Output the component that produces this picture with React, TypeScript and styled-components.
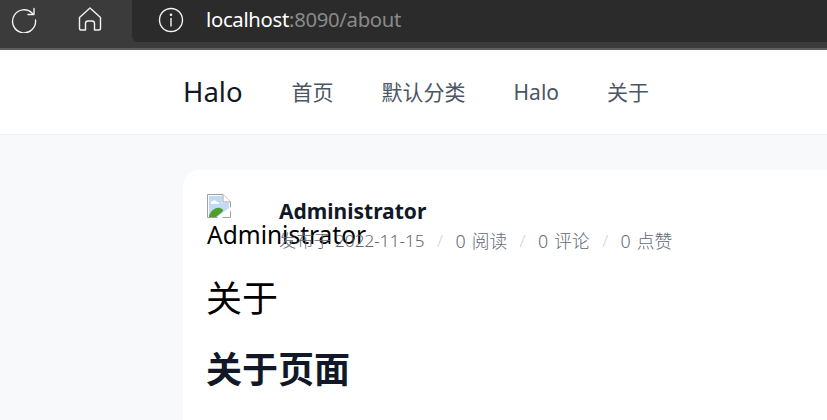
import styled, { createGlobalStyle } from "styled-components";

const FONT = `"Noto Sans", "Noto Sans CJK SC", sans-serif`;

const GlobalStyle = createGlobalStyle`
  html, body {
    margin: 0;
    padding: 0;
    height: 420px;
    overflow: hidden;
    background-color: #f8f9fb;
    font-family: ${FONT};
  }
`;

const BrowserBar = styled.div`
  display: flex;
  height: 48px;
  background-color: #3b3b3b;
  border-bottom: 2px solid #5f5f5f;
`;

const ToolButtons = styled.div`
  display: flex;
  align-items: flex-start;
  width: 132px;
  flex-shrink: 0;
  padding: 7px 0 0 11px;
  gap: 40px;
  box-sizing: border-box;
`;

const AddressBar = styled.div`
  flex: 1;
  box-sizing: border-box;
  height: 42px;
  display: flex;
  align-items: center;
  padding: 0 0 3px 26px;
  gap: 22px;
  background-color: #2b2b2b;
  border-bottom-left-radius: 6px;
`;

const Url = styled.span`
  font-size: 20.3px;
  letter-spacing: -0.3px;
  color: #ffffff;
  margin-top: -1px;
`;

const UrlRest = styled.span`
  color: #8a8a8a;
`;

const Header = styled.header`
  height: 84px;
  display: flex;
  align-items: center;
  padding-left: 183px;
  background-color: #ffffff;
  border-bottom: 1px solid #eef0f3;
`;

const Brand = styled.a`
  font-size: 27.5px;
  line-height: 84px;
  color: #111827;
  margin-right: 49px;
`;

const Nav = styled.nav`
  display: flex;
  align-items: baseline;
  gap: 48px;
`;

const NavLink = styled.a`
  font-size: 21px;
  line-height: 28px;
  color: #4b5563;
`;

const Main = styled.main`
  padding: 35px 0 0 183px;
`;

const Card = styled.article`
  box-sizing: border-box;
  background-color: #ffffff;
  border-radius: 16px 0 0 0;
  padding: 24px;
  height: 250px;
`;

const AuthorRow = styled.div`
  display: flex;
  gap: 24px;
`;

const Avatar = styled.div`
  width: 48px;
  height: 48px;
  flex-shrink: 0;
`;

const BrokenImage = styled.svg`
  display: block;
`;

const AvatarAlt = styled.div`
  font-size: 24.5px;
  line-height: 34px;
  color: #000000;
  white-space: nowrap;
`;

const AuthorInfo = styled.div`
  display: flex;
  flex-direction: column;
`;

const AuthorName = styled.div`
  font-size: 21px;
  line-height: 34px;
  font-weight: 700;
  color: #111827;
`;

const Meta = styled.div`
  display: flex;
  font-size: 17.2px;
  font-weight: 300;
  line-height: 26px;
  color: #616875;
`;

const Stat = styled.span`
  font-size: 17.8px;
  word-spacing: 1.5px;
`;

const Slash = styled.span`
  color: #d1d5db;
  margin: 0 12.4px;
`;

const PageTitle = styled.h1`
  margin: 20px 0 0 -1px;
  font-size: 36px;
  line-height: 50px;
  font-weight: 400;
  color: #000000;
`;

const Heading = styled.h2`
  margin: 21px 0 0 -1px;
  font-size: 36px;
  line-height: 50px;
  font-weight: 700;
  color: #111827;
`;

export default function App() {
  return (
    <>
      <GlobalStyle />
      <BrowserBar>
        <ToolButtons>
          <svg width="26" height="26" viewBox="0 0 26 26" fill="none" stroke="#f2f2f2" strokeWidth="1.4" strokeLinecap="round" strokeLinejoin="round">
            <path d="M21.5 6.5A11.5 11.5 0 1 0 24.5 13" />
            <path d="M23 1.5V7.5H17" />
          </svg>
          <svg width="26" height="26" viewBox="0 0 26 26" fill="none" stroke="#f2f2f2" strokeWidth="1.4" strokeLinecap="round" strokeLinejoin="round">
            <path d="M13 1L23.5 10.5V21.5A1.5 1.5 0 0 1 22 23H17.5V16.5A2.5 2.5 0 0 0 15 14H11A2.5 2.5 0 0 0 8.5 16.5V23H4A1.5 1.5 0 0 1 2.5 21.5V10.5Z" />
          </svg>
        </ToolButtons>
        <AddressBar>
          <svg width="26" height="26" viewBox="0 0 26 26" fill="none" stroke="#f2f2f2" strokeWidth="1.4" strokeLinecap="round">
            <circle cx="13" cy="13" r="11.5" />
            <path d="M13 11.5V19" />
            <circle cx="13" cy="7.8" r="0.6" fill="#f2f2f2" />
          </svg>
          <Url>
            localhost<UrlRest>:8090/about</UrlRest>
          </Url>
        </AddressBar>
      </BrowserBar>
      <Header>
        <Brand>Halo</Brand>
        <Nav>
          <NavLink>首页</NavLink>
          <NavLink>默认分类</NavLink>
          <NavLink>Halo</NavLink>
          <NavLink>关于</NavLink>
        </Nav>
      </Header>
      <Main>
        <Card>
          <AuthorRow>
            <Avatar>
              <BrokenImage width="24" height="24" viewBox="0 0 24 24">
                <path d="M0.5 0.5H16L23.5 8V23.5H0.5Z" fill="#ffffff" stroke="#a0a0a0" />
                <path d="M2 2H15V9H22V14L10 23H2Z" fill="#c3daf6" />
                <path d="M4 8C6 6 9 6 10 8C12 8 13 9 12 10H4Z" fill="#ffffff" />
                <path d="M2 22C4 16 9 13 13 14C16 15 17 16 15 18L9 23H2Z" fill="#4f9e2e" />
                <path d="M16 0.5V8H23.5" fill="#ffffff" stroke="#a0a0a0" />
                <path d="M10 24L24 13V17L15 24Z" fill="#ffffff" />
              </BrokenImage>
              <AvatarAlt>Administrator</AvatarAlt>
            </Avatar>
            <AuthorInfo>
              <AuthorName>Administrator</AuthorName>
              <Meta>
                <span>发布于 2022-11-15</span>
                <Slash>/</Slash>
                <Stat>0 阅读</Stat>
                <Slash>/</Slash>
                <Stat>0 评论</Stat>
                <Slash>/</Slash>
                <Stat>0 点赞</Stat>
              </Meta>
            </AuthorInfo>
          </AuthorRow>
          <PageTitle>关于</PageTitle>
          <Heading>关于页面</Heading>
        </Card>
      </Main>
    </>
  );
}
